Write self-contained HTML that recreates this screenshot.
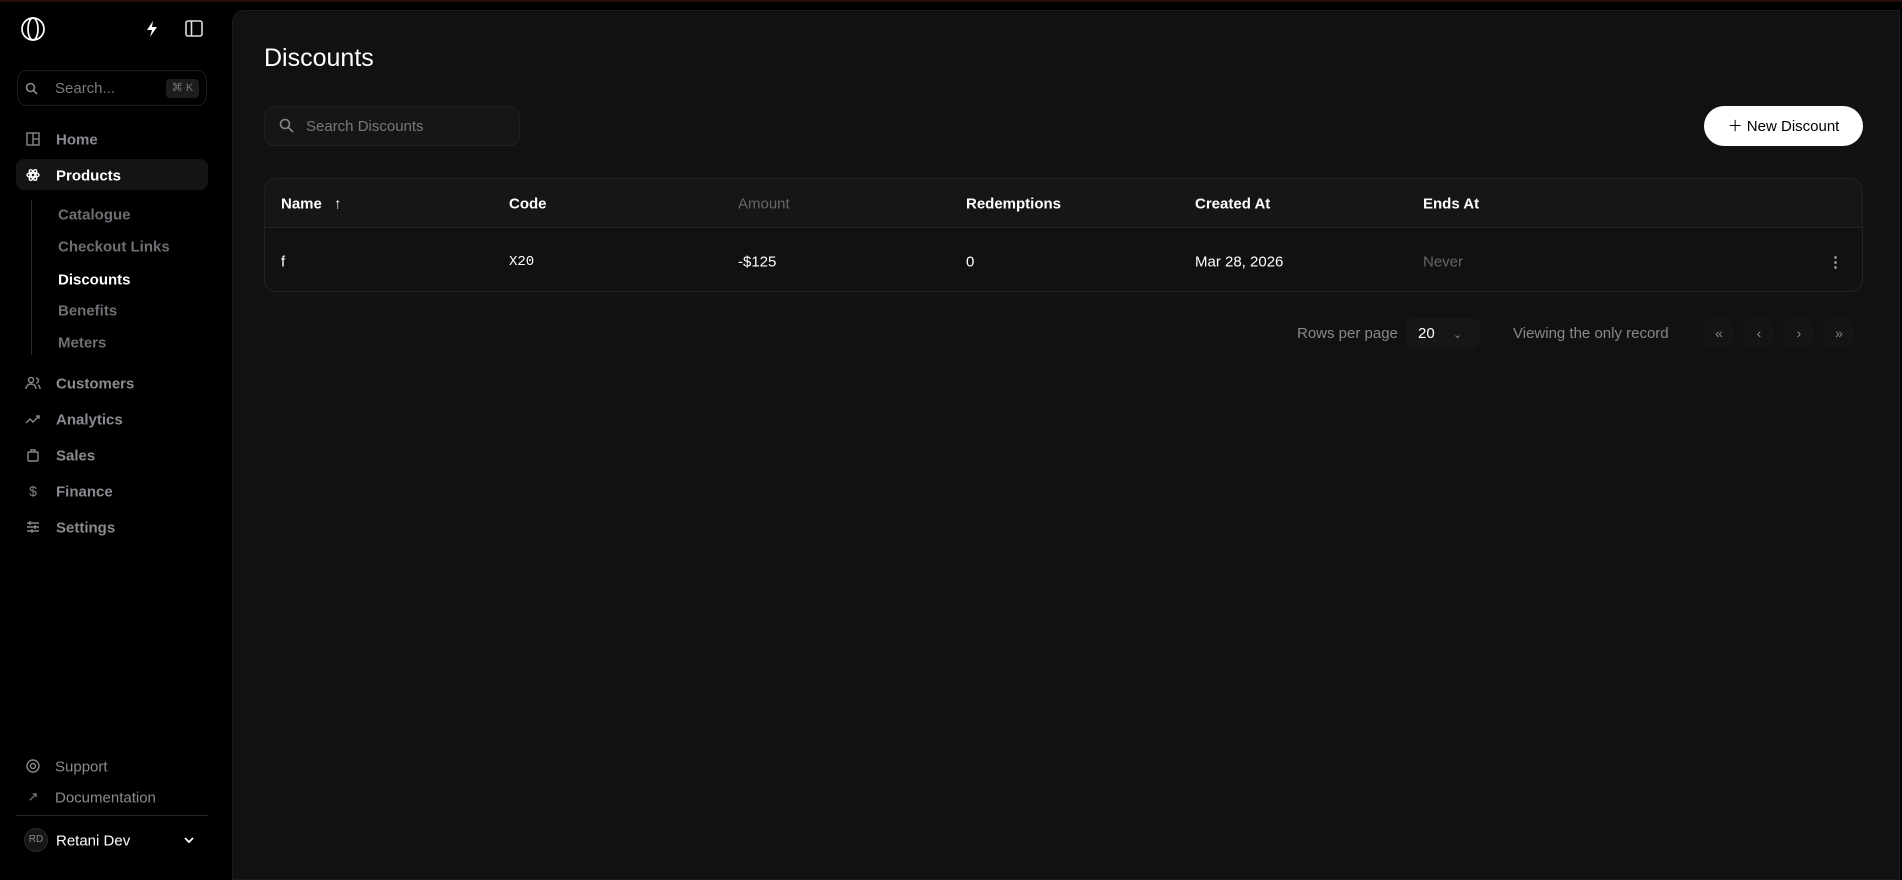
<!DOCTYPE html>
<html><head><meta charset="utf-8"><style>
*{box-sizing:border-box;margin:0;padding:0}
body{width:1902px;height:871px;background:#000;font-family:"Liberation Sans",sans-serif;color:#fff;position:relative;overflow:hidden}
.topline{position:absolute;left:0;top:0;width:1902px;height:2px;background:#2a0d0d}
.abs{position:absolute}
.nav{position:absolute;left:56px;font-size:15px;color:#8a8a90;font-weight:bold;transform:translateY(-45%)}
.sub{position:absolute;left:58px;font-size:15px;color:#6e6e74;font-weight:bold;transform:translateY(-45%)}
.ic{position:absolute;left:25px;width:16px;height:16px;transform:translateY(-50%)}
.main{position:absolute;left:232px;top:10px;width:1668px;height:870px;background:#111112;border-radius:12px 0 0 0;border:1px solid #1c1c1e}
.th{position:absolute;top:203px;transform:translateY(-45%);font-size:15px;font-weight:bold;color:#fff}
.td{position:absolute;top:261px;transform:translateY(-45%);font-size:15px;color:#fff}
.pg{position:absolute;top:333px;transform:translate(-50%,-50%);width:30px;height:30px;border-radius:8px;background:#141416;color:#888;font-size:14px;text-align:center;line-height:30px}
</style></head><body>
<div class="topline"></div>
<svg class="abs" style="left:20px;top:16px" width="26" height="26" viewBox="0 0 26 26" fill="none" stroke="#fff" stroke-width="1.7"><circle cx="13" cy="13" r="11"/><ellipse cx="13" cy="13" rx="5" ry="11"/></svg>
<svg class="abs" style="left:144px;top:20px" width="16" height="18" viewBox="0 0 16 18"><path d="M9 1L3 10h5l-2 7 7-10H8l1-6z" fill="#fff"/></svg>
<svg class="abs" style="left:185px;top:20px" width="18" height="17" viewBox="0 0 18 17" fill="none" stroke="#ddd" stroke-width="1.6"><rect x="1" y="1" width="16" height="15" rx="2"/><line x1="6.5" y1="1" x2="6.5" y2="16"/></svg>
<div class="abs" style="left:17px;top:70px;width:190px;height:36px;border:1px solid #1c1c1f;border-radius:10px"></div>
<svg class="abs" style="left:25px;top:82px" width="13" height="13" viewBox="0 0 13 13" fill="none" stroke="#888" stroke-width="1.6"><circle cx="5.5" cy="5.5" r="4"/><line x1="8.5" y1="8.5" x2="12" y2="12"/></svg>
<div class="abs" style="left:55px;top:80px;font-size:15px;color:#7a7a80">Search...</div>
<div class="abs" style="left:166px;top:79px;width:33px;height:19px;background:#1d1d20;border-radius:4px;font-size:11px;color:#777;text-align:center;line-height:19px">⌘ K</div>
<svg class="ic" style="top:139px" viewBox="0 0 16 16" fill="none" stroke="#888" stroke-width="1.4"><rect x="2" y="2" width="12" height="12"/><line x1="8" y1="2" x2="8" y2="14"/><line x1="8" y1="8" x2="14" y2="8"/></svg>
<div class="nav" style="top:139px">Home</div>
<div class="abs" style="left:16px;top:159px;width:192px;height:31px;background:#141416;border-radius:8px"></div>
<svg class="ic" style="top:175px" viewBox="0 0 16 16" fill="none" stroke="#fff" stroke-width="1.4"><circle cx="8" cy="8" r="2"/><ellipse cx="8" cy="8" rx="6" ry="2.5"/><ellipse cx="8" cy="8" rx="6" ry="2.5" transform="rotate(60 8 8)"/><ellipse cx="8" cy="8" rx="6" ry="2.5" transform="rotate(120 8 8)"/></svg>
<div class="nav" style="top:175px;color:#fff">Products</div>
<div class="abs" style="left:31px;top:200px;width:1px;height:155px;background:#2a2a2d"></div>
<div class="sub" style="top:214px">Catalogue</div>
<div class="sub" style="top:246px">Checkout Links</div>
<div class="sub" style="top:279px;color:#fff">Discounts</div>
<div class="sub" style="top:310px">Benefits</div>
<div class="sub" style="top:342px">Meters</div>
<svg class="ic" style="top:383px" viewBox="0 0 16 16" fill="none" stroke="#888" stroke-width="1.4"><circle cx="6" cy="5" r="2.5"/><path d="M1 14c0-3 2-5 5-5s5 2 5 5M11 3a2.5 2.5 0 010 5M13 10c1.5.8 2 2.3 2 4"/></svg>
<div class="nav" style="top:383px">Customers</div>
<svg class="ic" style="top:419px" viewBox="0 0 16 16" fill="none" stroke="#888" stroke-width="1.4"><path d="M1 12l4-4 3 3 6-6M11 5h3v3"/></svg>
<div class="nav" style="top:419px">Analytics</div>
<svg class="ic" style="top:455px" viewBox="0 0 16 16" fill="none" stroke="#888" stroke-width="1.4"><rect x="3" y="5" width="10" height="9" rx="1"/><path d="M6 5V3h4v2"/></svg>
<div class="nav" style="top:455px">Sales</div>
<div class="ic" style="top:491px;color:#888;font-size:14px;text-align:center;line-height:16px">$</div>
<div class="nav" style="top:491px">Finance</div>
<svg class="ic" style="top:527px" viewBox="0 0 16 16" fill="none" stroke="#888" stroke-width="1.4"><path d="M2 4h12M2 8h12M2 12h12M5 2v4M10 6v4M7 10v4"/></svg>
<div class="nav" style="top:527px">Settings</div>
<svg class="ic" style="top:766px" viewBox="0 0 16 16" fill="none" stroke="#888" stroke-width="1.4"><circle cx="8" cy="8" r="6"/><circle cx="8" cy="8" r="2.5"/></svg>
<div class="nav" style="top:766px;left:55px;font-weight:normal">Support</div>
<div class="ic" style="top:797px;color:#888;font-size:13px;text-align:center;line-height:16px">↗</div>
<div class="nav" style="top:797px;left:55px;font-weight:normal">Documentation</div>
<div class="abs" style="left:16px;top:815px;width:192px;height:1px;background:#2a2a2d"></div>
<div class="abs" style="left:24px;top:828px;width:24px;height:24px;border-radius:50%;background:#161618;border:1px solid #2a2a2d;font-size:10px;color:#888;text-align:center;line-height:22px">RD</div>
<div class="nav" style="top:840px;color:#fff;font-weight:normal">Retani Dev</div>
<svg class="abs" style="left:183px;top:835px" width="12" height="10" viewBox="0 0 12 10" fill="none" stroke="#fff" stroke-width="1.8"><path d="M2 3l4 4 4-4"/></svg>
<div class="main"></div>
<div class="abs" style="left:264px;top:44px;font-size:25px">Discounts</div>
<div class="abs" style="left:264px;top:106px;width:256px;height:40px;background:#161618;border:1px solid #1f1f22;border-radius:10px"></div>
<svg class="abs" style="left:279px;top:118px" width="15" height="15" viewBox="0 0 15 15" fill="none" stroke="#888" stroke-width="1.6"><circle cx="6" cy="6" r="4.5"/><line x1="9.5" y1="9.5" x2="14" y2="14"/></svg>
<div class="abs" style="left:306px;top:118px;font-size:15px;color:#777">Search Discounts</div>
<div class="abs" style="left:1704px;top:106px;width:159px;height:40px;background:#fff;border-radius:20px;color:#000;font-size:15px;line-height:41px;text-align:center">＋ New Discount</div>
<div class="abs" style="left:264px;top:178px;width:1599px;height:114px;border:1px solid #222225;border-radius:12px;overflow:hidden"><div style="height:49px;background:#161618;border-bottom:1px solid #232326"></div></div>
<div class="th" style="left:281px">Name <span style="margin-left:8px">↑</span></div>
<div class="th" style="left:509px">Code</div>
<div class="th" style="left:738px;color:#666;font-weight:normal">Amount</div>
<div class="th" style="left:966px">Redemptions</div>
<div class="th" style="left:1195px">Created At</div>
<div class="th" style="left:1423px">Ends At</div>
<div class="td" style="left:281px">f</div>
<div class="td" style="left:509px;font-family:'Liberation Mono',monospace;font-size:14px">X20</div>
<div class="td" style="left:738px">-$125</div>
<div class="td" style="left:966px">0</div>
<div class="td" style="left:1195px">Mar 28, 2026</div>
<div class="td" style="left:1423px;color:#666">Never</div>
<div class="td" style="left:1828px;color:#aaa;font-weight:bold">⋮</div>
<div class="abs" style="left:1297px;top:325px;font-size:15px;color:#888">Rows per page</div>
<div class="abs" style="left:1405px;top:318px;width:75px;height:31px;background:#161618;border-radius:8px;font-size:15px;line-height:31px;padding-left:13px">20 <span style="color:#888;font-size:11px;margin-left:14px">⌄</span></div>
<div class="abs" style="left:1513px;top:325px;font-size:15px;color:#888">Viewing the only record</div>
<div class="pg" style="left:1719px">«</div>
<div class="pg" style="left:1759px">‹</div>
<div class="pg" style="left:1799px">›</div>
<div class="pg" style="left:1839px">»</div>
</body></html>
